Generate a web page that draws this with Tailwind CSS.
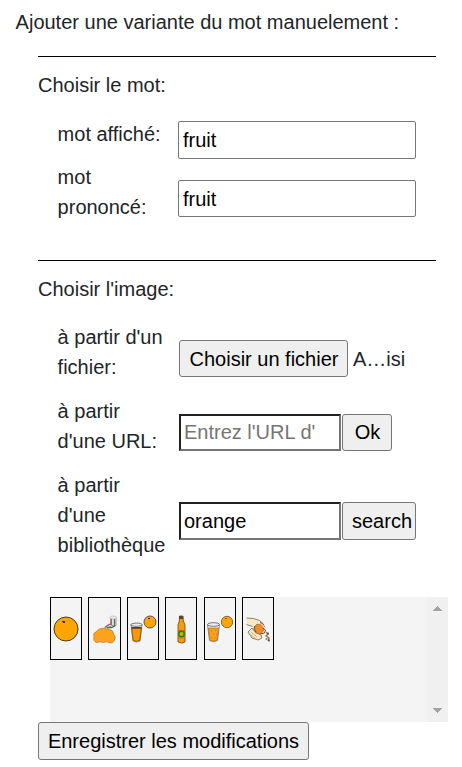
<!DOCTYPE html>
<html lang="fr">
<head>
<meta charset="utf-8">
<title>Ajouter une variante</title>
<script src="https://cdn.jsdelivr.net/npm/@tailwindcss/browser@4"></script>
</head>
<body class="bg-white text-[#212529] text-[20px] leading-[30px] font-['Liberation_Sans',Arial,sans-serif] w-[462px] h-[767px] overflow-hidden">
<form class="pt-[7px]">
  <p class="pl-[15.6px] whitespace-nowrap">Ajouter une variante du mot manuelement :</p>

  <section class="ml-[38px] mt-[19px] w-[398px] h-[204px] border-t border-black pt-[13px]">
    <h2>Choisir le mot:</h2>
    <div class="mt-[19px] ml-[19px] flex h-[43px]">
      <label class="w-[121px] pl-[0.6px] whitespace-nowrap">mot affiché:</label>
      <input type="text" value="fruit" class="mt-[2px] w-[238px] h-[38px] border border-[#767676] rounded-[2px] px-[4px] text-black bg-white">
    </div>
    <div class="ml-[19px] flex h-[60px]">
      <label class="w-[121px] pl-[0.6px] pr-[20px]">mot prononcé:</label>
      <input type="text" value="fruit" class="mt-[18px] w-[238px] h-[37px] border border-[#767676] rounded-[2px] px-[4px] pt-[1px] text-black bg-white">
    </div>
  </section>

  <section class="ml-[38px] w-[398px] h-[337px] border-t border-black pt-[13px]">
    <h2>Choisir l'image:</h2>
    <div class="mt-[18px] ml-[19px] flex h-[74px]">
      <label class="w-[122px] pl-[0.6px] pr-[8px]">à partir d'un fichier:</label>
      <button type="button" class="mt-[18px] w-[169px] h-[37px] border border-[#767676] rounded-[3px] bg-[#efefef] pl-[1px] text-black whitespace-nowrap">Choisir un fichier</button>
      <span class="mt-[22px] ml-[5px]">A…isi</span>
    </div>
    <div class="ml-[19px] flex h-[74px]">
      <label class="w-[122px] pl-[0.6px]">à partir<br>d'une URL:</label>
      <div class="mt-[18px] w-[162px] h-[37px] border-2 border-t-[#212121] border-l-[#212121] border-r-[#767676] border-b-[#767676] pl-[3px] pr-[23px] bg-white">
        <input type="text" placeholder="Entrez l'URL d'une image" class="block w-full h-[33px] placeholder:text-[#757575]">
      </div>
      <button type="button" class="mt-[18px] ml-[1px] w-[50px] h-[37px] border border-[#767676] rounded-[3px] bg-[#efefef] pb-[2px] pl-[1px] text-black">Ok</button>
    </div>
    <div class="ml-[19px] flex h-[90px]">
      <label class="w-[122px] pl-[0.6px]">à partir<br>d'une<br>bibliothèque</label>
      <input type="text" value="orange" class="mt-[32px] w-[162px] h-[38px] border-2 border-t-[#212121] border-l-[#212121] border-r-[#767676] border-b-[#767676] px-[3px] bg-white text-black">
      <button type="button" class="mt-[32px] ml-[1px] w-[74px] h-[38px] border border-[#767676] rounded-[3px] bg-[#efefef] text-black pl-[9px] text-left">search</button>
    </div>
  </section>

  <div class="ml-[50px] w-[398px] h-[125px] bg-[#f4f4f4] flex justify-between">
    <div class="flex gap-[6px]">
      <div class="w-[32px] h-[63px] border border-black">
        <svg width="30" height="61" viewBox="0 0 30 61"><circle cx="15" cy="31" r="12" fill="#ffa500" stroke="#4a3a20" stroke-width="1"/><path d="M11 23.300l2.500.6" stroke="#333" stroke-width=".9" fill="none"/><circle cx="13" cy="24" r="1.100" fill="#111"/></svg>
      </div>
      <div class="w-[33px] h-[63px] border border-black">
        <svg width="31" height="61" viewBox="0 0 31 61"><path d="M8 44.500Q4 44 5 38.500Q3.500 35 7.500 33.500Q9 30.500 13 30.500Q18 29 20.500 31.500Q24.500 32 24.500 36Q27.500 39 25.500 42Q24 46 20 44.500Q17 43 14.500 44.500Q11 43 8 44.500Z" fill="#fba31c" stroke="#b77f35" stroke-width=".8"/><path d="M16 29.500l4-3h2.500v-6" stroke="#c55" stroke-width="1.400" fill="none"/><path d="M17 29.800l6-2h1.500v-7" stroke="#eee" stroke-width="1.400" fill="none"/><path d="M17.500 29.500h5l3-1.500v-7" stroke="#287b68" stroke-width="1.300" fill="none"/><path d="M21.500 20v6l-6 3M27 20v7.500h-4l-4 2" stroke="#777" stroke-width=".7" fill="none"/><ellipse cx="24.300" cy="19.500" rx="3.300" ry="1.500" fill="#eee" stroke="#aaa" stroke-width=".6"/></svg>
      </div>
      <div class="w-[32px] h-[63px] border border-black">
        <svg width="30" height="61" viewBox="0 0 30 61"><circle cx="22" cy="24" r="6" fill="#ffa500" stroke="#665139"/><path d="M20 20.500h2" stroke="#222"/><path d="M3 27l2 16q3.500 2 7 0l2-16z" fill="#f4f4f4" stroke="#777" stroke-width=".8"/><path d="M3.700 30h9.600l-1.500 12.500q-3.300 1.700-6.600 0z" fill="#ff9800" stroke="#754b13" stroke-width=".8"/><ellipse cx="8.500" cy="26.700" rx="5.700" ry="1.600" fill="#eee" stroke="#555" stroke-width=".8"/><path d="M3.500 29.800h10" stroke="#222" stroke-width="1.200"/></svg>
      </div>
      <div class="w-[32px] h-[63px] border border-black">
        <svg width="30" height="61" viewBox="0 0 30 61"><path d="M13.500 18h3.500l.4 5 1.600 4v17q-3.500 2-7 0V27l1.300-4z" fill="#f99a0c" stroke="#815017" stroke-width=".9"/><path d="M13 18h4v3h-4z" fill="#5a4630"/><circle cx="15.500" cy="36" r="2.700" fill="#f6a000" stroke="#138a1d" stroke-width="1.500"/><path d="M12 32.500h7M12 40h7" stroke="#a3640f" stroke-width=".6"/></svg>
      </div>
      <div class="ml-[1px] w-[32px] h-[63px] border border-black">
        <svg width="30" height="61" viewBox="0 0 30 61"><circle cx="22" cy="24" r="5.700" fill="#ffa500" stroke="#8a6a3a"/><path d="M20 20.500h2" stroke="#876020"/><path d="M2.500 27l2 15.500q4 2.500 8 0l2-15.500z" fill="#f4f4f4" stroke="#777" stroke-width=".8"/><path d="M3.400 30h10.200l-1.600 12.200q-3.500 2-7 0z" fill="#ff9f10" stroke="#a66c22" stroke-width=".7"/><ellipse cx="8.500" cy="26.500" rx="6" ry="1.800" fill="#eee" stroke="#555" stroke-width=".8"/><path d="M6 33h1M10 32.500h1M8 36h1M11 36h1M6.500 39.500h1M10 40h1" stroke="#9c875e" stroke-width="1.200"/></svg>
      </div>
      <div class="w-[32px] h-[63px] border border-black">
        <svg width="30" height="61" viewBox="0 0 30 61"><path d="M3.500 20l7 .5 6 2 4 3.500-2 2-6-1-3 1.500-6-2.500z" fill="#f8e8c8"/><path d="M3.500 20l7 .5 6 2 4 3.500M3.500 26.500l6 2" fill="none" stroke="#6f6250" stroke-width=".8"/><path d="M5 34l4-4 3 4 6 3 1 3-4 2-6-2z" fill="#f8e8c8" stroke="#75664f" stroke-width=".8"/><path d="M8 34l6 5M6.500 36l6 4.500" stroke="#a8906a" stroke-width=".6"/><path d="M11 29l3-3 5 1 2 5-3 4-5-1z" fill="#f08c25" stroke="#9c6428" stroke-width=".7"/><path d="M17 24.500l3 1.500 1.500 3M12 28l-1 3 2 3M20 30l2.500 2-1 3-4 1" fill="none" stroke="#74502f" stroke-width="1"/><path d="M18 26l4 4" stroke="#f3d4a0" stroke-width="1.500"/><path d="M23 34l2 2-2 2 3 2-1 3" fill="none" stroke="#9a6b46" stroke-width="1.300"/><circle cx="25" cy="35.500" r="1.100" fill="#6f5340"/><circle cx="23.500" cy="41" r="1.100" fill="#ad7b4f"/><circle cx="26" cy="42.500" r=".9" fill="#544438"/></svg>
      </div>
    </div>
    <div class="w-[21px] h-full bg-[#f0f0f0] flex flex-col justify-between items-center py-[9px]">
      <svg width="9" height="5" viewBox="0 0 9 5" fill="#a3a3a3" shape-rendering="crispEdges"><path d="M4 0h1v1h1v1h1v1h1v1h1v1H0V4h1V3h1V2h1V1h1z"/></svg>
      <svg width="9" height="5" viewBox="0 0 9 5" fill="#a3a3a3" shape-rendering="crispEdges"><path d="M0 0h9v1H8v1H7v1H6v1H5v1H4V4H3V3H2V2H1V1H0z"/></svg>
    </div>
  </div>
  <button type="button" class="block ml-[38px] w-[271px] h-[38px] border border-[#767676] rounded-[3px] bg-[#efefef] text-black whitespace-nowrap">Enregistrer les modifications</button>
</form>
</body>
</html>
